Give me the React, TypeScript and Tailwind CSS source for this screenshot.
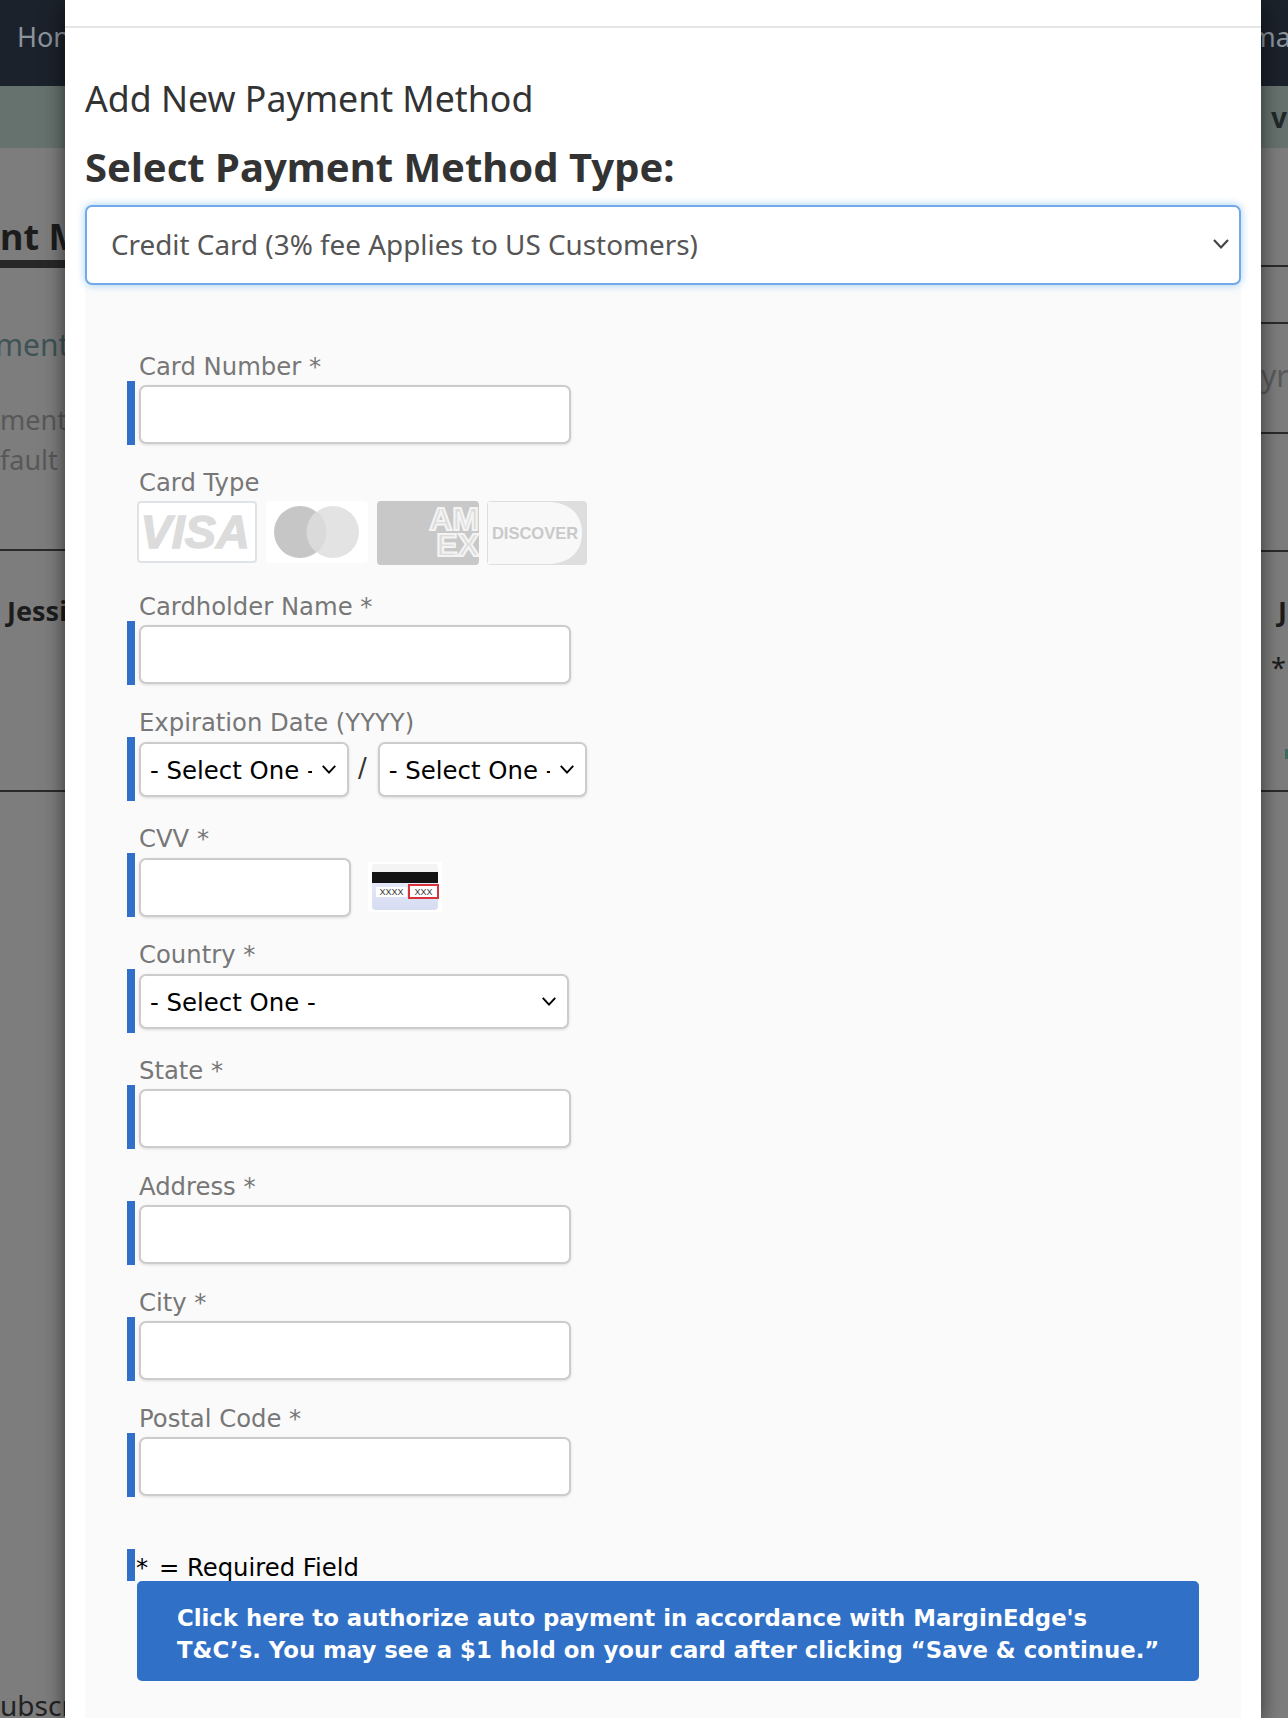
const FieldBar = () => <div className="w-2 self-stretch bg-[#3170c7] shrink-0" />

const inputCls =
  'block h-[59px] rounded-[7px] border-2 border-[#cccccc] bg-white shadow-[0_1px_3px_rgba(0,0,0,0.12)]'

const Chevron = ({ className }: { className: string }) => (
  <svg viewBox="0 0 18 12" fill="none" stroke="currentColor" strokeWidth="2.2" className={`pointer-events-none absolute ${className}`}>
    <path d="M2 2l7 7.5L16 2" />
  </svg>
)

const Label = ({ children }: { children: React.ReactNode }) => (
  <div className="h-[34px] pl-3 pt-[6px] text-[24.3px] leading-[28px] whitespace-nowrap text-[#777777]">{children}</div>
)

const TextField = ({ label, className = 'mt-[18px]' }: { label: string; className?: string }) => (
  <div className={className}>
    <Label>{label}</Label>
    <div className="flex h-16">
      <FieldBar />
      <div className="ml-1 pt-1">
        <input className={`${inputCls} w-[432px]`} />
      </div>
    </div>
  </div>
)

const SelectBox = ({ width }: { width: string }) => (
  <div className={`relative ml-1 mt-[5px] h-[55px] ${width}`}>
    <select className="h-full w-full appearance-none rounded-[7px] border-2 border-[#cccccc] bg-white pl-[9px] pr-[35px] pt-[3px] text-[24.4px] text-black shadow-[0_1px_3px_rgba(0,0,0,0.12)]">
      <option>- Select One -</option>
    </select>
    <Chevron className="right-[12px] top-[22px] h-[11px] w-4 text-black" />
  </div>
)

const CardLogos = () => (
  <div className="mt-[4px] flex h-[64px] items-start pl-[10px]">
    <svg width="120" height="62" viewBox="0 0 120 62" className="rounded-sm border-2 border-[#dfe3e8] bg-white">
      <text x="58" y="48" textAnchor="middle" fontFamily="Liberation Sans" fontStyle="italic" fontWeight="700" fontSize="50" fill="#dcdcdc" stroke="#dcdcdc" strokeWidth="1.5">VISA</text>
    </svg>
    <svg width="102" height="62" viewBox="0 0 102 62" className="ml-[9px] rounded-sm bg-white">
      <circle cx="67" cy="31" r="26" fill="#e3e3e3" />
      <circle cx="34" cy="31" r="26" fill="#c6c6c6" />
      <path d="M50.5 10.5a26 26 0 0 1 0 41a26 26 0 0 1 0-41z" fill="#dadada" />
    </svg>
    <svg width="102" height="64" viewBox="0 0 102 64" className="ml-[9px] rounded-sm bg-[#c8c8c8]">
      <text x="102" y="29" textAnchor="end" fontFamily="Liberation Sans" fontWeight="700" fontSize="32" fill="#dcdcdc" stroke="#f4f4f4" strokeWidth="2">AM</text>
      <text x="102" y="55" textAnchor="end" fontFamily="Liberation Sans" fontWeight="700" fontSize="32" fill="#dcdcdc" stroke="#f4f4f4" strokeWidth="2">EX</text>
    </svg>
    <svg width="100" height="64" viewBox="0 0 100 64" className="ml-2 rounded-sm bg-[#dedede]">
      <path d="M1 1h63c22 2 31 15 31 31s-9 29-31 31H1z" fill="#f8f8f8" />
      <text x="48" y="38" textAnchor="middle" fontFamily="Liberation Sans" fontWeight="700" fontSize="16.5" fill="#c9c9c9">DISCOVER</text>
    </svg>
  </div>
)

const CvvIcon = () => (
  <svg width="74" height="50" viewBox="0 0 74 50" className="ml-[17px] mt-[9px]">
    <defs>
      <linearGradient id="cvvBack" x1="0" y1="0" x2="0" y2="1">
        <stop offset="0" stopColor="#eef0fa" />
        <stop offset="1" stopColor="#d6dcf2" />
      </linearGradient>
    </defs>
    <rect width="74" height="50" fill="#ffffff" />
    <rect x="4" y="2" width="66" height="46" rx="4" fill="url(#cvvBack)" />
    <rect x="4" y="2" width="66" height="8" rx="3" fill="#f4f4f4" />
    <rect x="4" y="10" width="66" height="11" fill="#141414" />
    <rect x="8" y="25" width="31" height="10" fill="#ffffff" />
    <text x="23.5" y="33" textAnchor="middle" fontFamily="Liberation Sans" fontSize="9" fill="#333333">XXXX</text>
    <rect x="41" y="23" width="29" height="13" fill="#ffffff" stroke="#d8333a" strokeWidth="2" />
    <text x="55.5" y="33" textAnchor="middle" fontFamily="Liberation Sans" fontSize="9" fill="#333333">XXX</text>
  </svg>
)

const Background = () => (
  <div className="text-[#222222]">
    <div className="flex h-[86px] items-center justify-between bg-[#1b222b] pb-3 pl-[17px] text-[27px] text-[#8c949c]">
      <span>Hon</span>
      <span className="-mr-[3px]">ma</span>
    </div>
    <div className="flex h-[62px] items-center justify-end bg-[#66726e] pr-[1px] text-[28px] font-bold text-[#20282a]">
      v
    </div>
    <div className="flex justify-between">
      <div className="w-[65px]">
        <div className="flex h-[120px] items-end border-b-8 border-[#282828] text-[36px] leading-[46px] font-bold whitespace-nowrap text-[#1c1c1c]">
          nt M
        </div>
        <div className="-ml-[5px] pt-[55px] text-[30px] leading-[44px] whitespace-nowrap text-[#3e5356]">ment</div>
        <div className="pt-[33px] text-[27px] leading-[40px] whitespace-nowrap text-[#585858]">
          ment
          <br />
          fault
        </div>
        <div className="mt-[69px] border-b-2 border-[#2a2a2a]" />
        <div className="pt-[40px] pl-[7px] text-[27px] leading-[40px] font-bold whitespace-nowrap text-[#1c1c1c]">Jessi</div>
        <div className="mt-[159px] border-b-2 border-[#2a2a2a]" />
      </div>
      <div className="w-[27px]">
        <div className="h-[119px] border-b-2 border-[#2a2a2a]" />
        <div className="h-[57px] border-b-2 border-[#2a2a2a]" />
        <div className="h-[110px] border-b-2 border-[#2a2a2a] pt-[30px] text-[30px] leading-[44px] text-[#5a5a5a]">yr</div>
        <div className="h-[118px] border-b-2 border-[#2a2a2a]" />
        <div className="pt-[39px] pl-[17px] text-[27px] leading-[40px] font-bold text-[#1c1c1c]">J</div>
        <div className="pt-[20px] pl-[10px] text-[27px] leading-[34px] text-[#1c1c1c]">*</div>
        <div className="mt-[64px] ml-[24px] h-[10px] w-[3px] bg-[#3f6b60]" />
        <div className="mt-[31px] border-b-2 border-[#2a2a2a]" />
      </div>
    </div>
    <div className="pt-[893px] text-[28px] leading-[40px]">ubscr</div>
  </div>
)

export default function App() {
  return (
    <div className="relative h-[1718px] w-[1288px] overflow-hidden bg-[#7d7d7d] font-['Noto_Sans',sans-serif]">
      <Background />

      {/* Modal */}
      <div className="absolute inset-y-0 left-[65px] w-[1196px] bg-white shadow-[0_5px_20px_rgba(0,0,0,0.6)]">
        <div className="h-[28px] border-b-2 border-[#e5e5e5]" />
        <div className="px-5">
          <h4 className="pt-[46px] text-[35.7px] leading-[48px] text-[#333333]">Add New Payment Method</h4>
          <h3 className="pt-[21px] text-[40px] leading-[48px] font-bold text-[#333333]">Select Payment Method Type:</h3>

          <div className="relative mt-[14px] h-[80px] w-[1156px]">
            <select className="h-full w-full appearance-none rounded-[7px] border-2 border-[#72a9e8] bg-white pl-[24px] text-[27.85px] text-[#555555] shadow-[0_0_9px_rgba(102,175,233,0.6)]">
              <option>Credit Card (3% fee Applies to US Customers)</option>
            </select>
            <Chevron className="right-[11px] top-[33px] h-3 w-[18px] text-[#444444]" />
          </div>

          {/* Card form */}
          <div className="h-[1433px] bg-[#fafafa] pl-[42px] font-['DejaVu_Sans',sans-serif]">
            <div className="h-[44px]" />
            <TextField label="Card Number *" />

            <div className="mt-[18px]">
              <Label>Card Type</Label>
              <CardLogos />
            </div>

            <TextField label="Cardholder Name *" className="mt-[22px]" />

            <div className="mt-[18px]">
              <Label>Expiration Date (YYYY)</Label>
              <div className="flex h-16 items-start">
                <FieldBar />
                <SelectBox width="w-[210px]" />
                <span className="ml-[9px] mr-[7px] mt-[12px] text-[26px] leading-[38px] text-[#333333]">/</span>
                <SelectBox width="w-[209px]" />
              </div>
            </div>

            <div className="mt-[18px]">
              <Label>CVV *</Label>
              <div className="flex h-16">
                <FieldBar />
                <div className="ml-1 pt-[5px]">
                  <input className={`${inputCls} w-[212px]`} />
                </div>
                <CvvIcon />
              </div>
            </div>

            <div className="mt-[18px]">
              <Label>Country *</Label>
              <div className="flex h-16 items-start">
                <FieldBar />
                <SelectBox width="w-[430px]" />
              </div>
            </div>

            <TextField label="State *" />
            <TextField label="Address *" />
            <TextField label="City *" />
            <TextField label="Postal Code *" />

            <div className="mt-[52px] flex h-8 text-[24.3px] leading-[38px] text-black">
              <FieldBar />
              <span className="ml-px whitespace-pre">
                <span className="mr-[3px]">*</span> = Required Field
              </span>
            </div>
            <button className="ml-[10px] block h-[100px] w-[1062px] rounded-[5px] bg-[#3170c7] pl-[40px] pt-[5px] text-left text-[22.8px] leading-[32px] font-bold text-white">
              Click here to authorize auto payment in accordance with MarginEdge's
              <br />
              T&C’s. You may see a $1 hold on your card after clicking “Save & continue.”
            </button>
          </div>
        </div>
      </div>
    </div>
  )
}
